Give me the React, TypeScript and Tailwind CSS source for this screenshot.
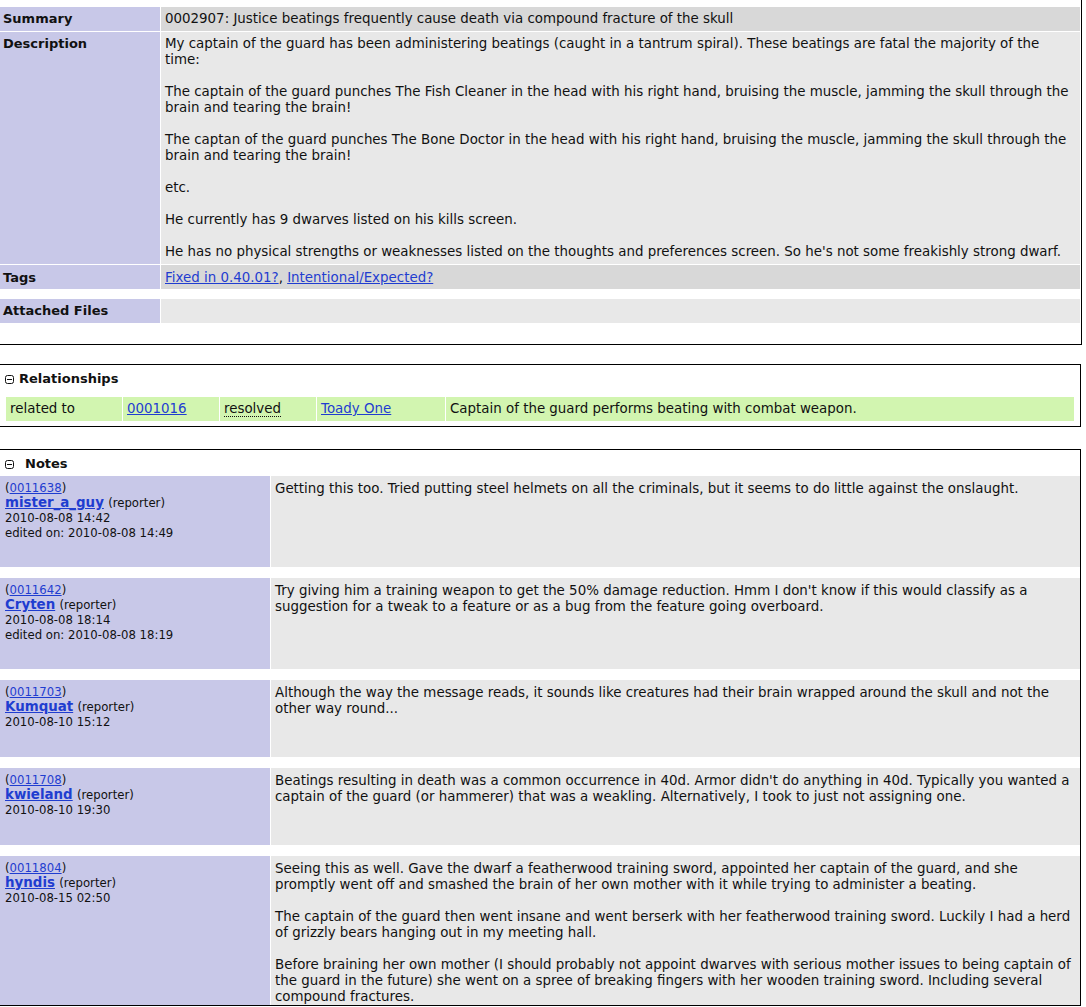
import React from "react";

const LINK = "text-[#1f3dd0] underline";

function Lines({ lines }: { lines: string[] }) {
  return (
    <>
      {lines.map((l, i) =>
        l === "" ? (
          <div key={i} className="h-4" />
        ) : (
          <div key={i} className="whitespace-nowrap">
            {l}
          </div>
        )
      )}
    </>
  );
}

function Collapse() {
  return (
    <svg width="9" height="9" viewBox="0 0 9 9" className="inline-block">
      <rect x="0.5" y="0.5" width="8" height="8" rx="2" fill="white" stroke="#111" strokeWidth="1" />
      <line x1="2" y1="4.5" x2="7" y2="4.5" stroke="#111" strokeWidth="1" />
    </svg>
  );
}

type Note = {
  id: string;
  name: string;
  date: string;
  edited?: string;
  lines: string[];
};

const notes: Note[] = [
  {
    id: "0011638",
    name: "mister_a_guy",
    date: "2010-08-08 14:42",
    edited: "2010-08-08 14:49",
    lines: [
      "Getting this too. Tried putting steel helmets on all the criminals, but it seems to do little against the onslaught.",
    ],
  },
  {
    id: "0011642",
    name: "Cryten",
    date: "2010-08-08 18:14",
    edited: "2010-08-08 18:19",
    lines: [
      "Try giving him a training weapon to get the 50% damage reduction. Hmm I don't know if this would classify as a",
      "suggestion for a tweak to a feature or as a bug from the feature going overboard.",
    ],
  },
  {
    id: "0011703",
    name: "Kumquat",
    date: "2010-08-10 15:12",
    lines: [
      "Although the way the message reads, it sounds like creatures had their brain wrapped around the skull and not the",
      "other way round...",
    ],
  },
  {
    id: "0011708",
    name: "kwieland",
    date: "2010-08-10 19:30",
    lines: [
      "Beatings resulting in death was a common occurrence in 40d. Armor didn't do anything in 40d. Typically you wanted a",
      "captain of the guard (or hammerer) that was a weakling. Alternatively, I took to just not assigning one.",
    ],
  },
  {
    id: "0011804",
    name: "hyndis",
    date: "2010-08-15 02:50",
    lines: [
      "Seeing this as well. Gave the dwarf a featherwood training sword, appointed her captain of the guard, and she",
      "promptly went off and smashed the brain of her own mother with it while trying to administer a beating.",
      "",
      "The captain of the guard then went insane and went berserk with her featherwood training sword. Luckily I had a herd",
      "of grizzly bears hanging out in my meeting hall.",
      "",
      "Before braining her own mother (I should probably not appoint dwarves with serious mother issues to being captain of",
      "the guard in the future) she went on a spree of breaking fingers with her wooden training sword. Including several",
      "compound fractures.",
    ],
  },
];

const description = [
  "My captain of the guard has been administering beatings (caught in a tantrum spiral). These beatings are fatal the majority of the",
  "time:",
  "",
  "The captain of the guard punches The Fish Cleaner in the head with his right hand, bruising the muscle, jamming the skull through the",
  "brain and tearing the brain!",
  "",
  "The captan of the guard punches The Bone Doctor in the head with his right hand, bruising the muscle, jamming the skull through the",
  "brain and tearing the brain!",
  "",
  "etc.",
  "",
  "He currently has 9 dwarves listed on his kills screen.",
  "",
  "He has no physical strengths or weaknesses listed on the thoughts and preferences screen. So he's not some freakishly strong dwarf.",
];

export default function App() {
  return (
    <div className="w-[1086px] h-[1007px] overflow-hidden bg-white font-['DejaVu_Sans',Verdana,sans-serif] text-[13.4px] leading-4 text-[#111]">
      {/* Issue details */}
      <div className="-ml-px w-[1083px] border-l border-r border-b border-black pt-[7px] pb-[21px]">
        <div className="grid grid-cols-[160px_919px] gap-px">
          <div className="bg-[#c8c8e8] pl-[3px] py-1 font-bold text-[13px]">Summary</div>
          <div className="bg-[#d8d8d8] px-1 py-1 whitespace-nowrap">
            0002907: Justice beatings frequently cause death via compound fracture of the skull
          </div>
          <div className="bg-[#c8c8e8] pl-[3px] py-1 font-bold text-[13px]">Description</div>
          <div className="bg-[#e8e8e8] px-1 py-1">
            <Lines lines={description} />
          </div>
          <div className="bg-[#c8c8e8] pl-[3px] pt-[5px] pb-[3px] font-bold text-[13px]">Tags</div>
          <div className="bg-[#d8d8d8] px-1 pt-[5px] pb-[3px] whitespace-nowrap">
            <a className={LINK}>Fixed in 0.40.01?</a>, <a className={LINK}>Intentional/Expected?</a>
          </div>
          <div className="col-span-2 h-[8px]" />
          <div className="bg-[#c8c8e8] pl-[3px] py-1 font-bold text-[13px]">Attached Files</div>
          <div className="bg-[#e8e8e8] px-1 py-1 h-6" />
        </div>
      </div>

      {/* Relationships */}
      <div className="-ml-px mt-[19px] w-[1082px] border border-black pt-[6px] pb-[5px]">
        <div className="flex items-center h-4 pl-[5px] font-bold text-[13px]">
          <Collapse />
          <span className="ml-[5px]">Relationships</span>
        </div>
        <div className="mt-[10px] ml-[6px] w-[1068px] flex gap-px">
          <div className="bg-[#d2f5b0] w-[116px] px-1 py-1">related to</div>
          <div className="bg-[#d2f5b0] w-[96px] px-1 py-1">
            <a className={LINK}>0001016</a>
          </div>
          <div className="bg-[#d2f5b0] w-[96px] px-1 py-1">
            <span className="border-b border-dotted border-[#111]">resolved</span>
          </div>
          <div className="bg-[#d2f5b0] w-[128px] px-1 py-1">
            <a className={LINK}>Toady One</a>
          </div>
          <div className="bg-[#d2f5b0] flex-1 px-1 py-1 whitespace-nowrap">
            Captain of the guard performs beating with combat weapon.
          </div>
        </div>
      </div>

      {/* Notes */}
      <div className="-ml-px mt-[22px] w-[1082px] border border-black pt-[6px]">
        <div className="flex items-center h-4 pl-[5px] font-bold text-[13px]">
          <Collapse />
          <span className="ml-[11px]">Notes</span>
        </div>
        <div className="mt-[4px] flex flex-col gap-[11px]">
          {notes.map((n) => (
            <div key={n.id} className="grid grid-cols-[270px_809px] gap-px">
              <div className="bg-[#c8c8e8] pl-[5px] pt-[5px] pb-[27px]">
                <div className="text-[11.7px] leading-[14px]">
                  (<a className={LINK}>{n.id}</a>)
                </div>
                <div className="leading-4">
                  <a className={`${LINK} font-bold`}>{n.name}</a>{" "}
                  <span className="text-[11.7px]">(reporter)</span>
                </div>
                <div className="text-[11.7px] leading-[15px]">{n.date}</div>
                {n.edited && (
                  <div className="text-[11.7px] leading-[14px]">edited on: {n.edited}</div>
                )}
              </div>
              <div className="bg-[#e8e8e8] pl-1 pt-[5px]">
                <Lines lines={n.lines} />
              </div>
            </div>
          ))}
        </div>
      </div>
    </div>
  );
}
